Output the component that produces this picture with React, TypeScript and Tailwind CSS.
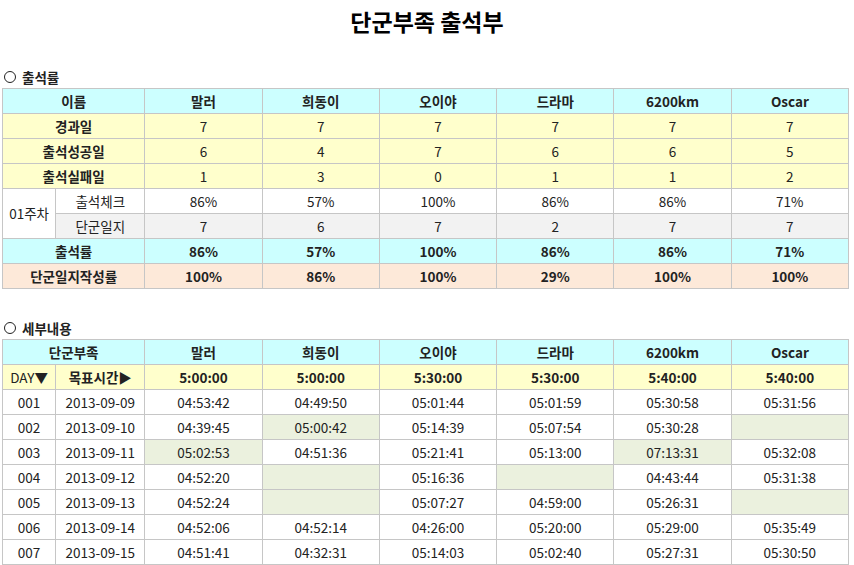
import React from "react";

const names = ["말러", "희동이", "오이야", "드라마", "6200km", "Oscar"];

const summary = {
  days: ["7", "7", "7", "7", "7", "7"],
  success: ["6", "4", "7", "6", "6", "5"],
  fail: ["1", "3", "0", "1", "1", "2"],
  check: ["86%", "57%", "100%", "86%", "86%", "71%"],
  journal: ["7", "6", "7", "2", "7", "7"],
  rate: ["86%", "57%", "100%", "86%", "86%", "71%"],
  journalRate: ["100%", "86%", "100%", "29%", "100%", "100%"],
};

const targets = ["5:00:00", "5:00:00", "5:30:00", "5:30:00", "5:40:00", "5:40:00"];

// "!" prefix marks a highlighted (late / missing) cell
const details = [
  { day: "001", date: "2013-09-09", times: ["04:53:42", "04:49:50", "05:01:44", "05:01:59", "05:30:58", "05:31:56"] },
  { day: "002", date: "2013-09-10", times: ["04:39:45", "!05:00:42", "05:14:39", "05:07:54", "05:30:28", "!"] },
  { day: "003", date: "2013-09-11", times: ["!05:02:53", "04:51:36", "05:21:41", "05:13:00", "!07:13:31", "05:32:08"] },
  { day: "004", date: "2013-09-12", times: ["04:52:20", "!", "05:16:36", "!", "04:43:44", "05:31:38"] },
  { day: "005", date: "2013-09-13", times: ["04:52:24", "!", "05:07:27", "04:59:00", "05:26:31", "!"] },
  { day: "006", date: "2013-09-14", times: ["04:52:06", "04:52:14", "04:26:00", "05:20:00", "05:29:00", "05:35:49"] },
  { day: "007", date: "2013-09-15", times: ["04:51:41", "04:32:31", "05:14:03", "05:02:40", "05:27:31", "05:30:50"] },
];

const td = "border border-[#c6c6c6] h-[25px] p-0 text-center align-middle";

const Colgroup = () => (
  <colgroup>
    <col className="w-[53px]" />
    <col className="w-[89px]" />
    {names.map((n) => (
      <col key={n} className="w-[117px]" />
    ))}
  </colgroup>
);

const ValueRow = ({ label, values, bg, bold }: { label: string; values: string[]; bg: string; bold?: boolean }) => (
  <tr className={bg}>
    <td colSpan={2} className={`${td} font-bold`}>
      {label}
    </td>
    {values.map((v, i) => (
      <td key={i} className={`${td} ${bold ? "font-bold" : ""}`}>
        {v}
      </td>
    ))}
  </tr>
);

const SectionTitle = ({ children }: { children: React.ReactNode }) => (
  <div className="flex items-center gap-[6px] pl-[2px] h-[18px] text-[13.5px] font-bold">
    <span className="w-[12px] h-[12px] rounded-full border-[1.5px] border-[#222]" />
    <span>{children}</span>
  </div>
);

export default function App() {
  return (
    <div
      className="w-[854px] h-[565px] bg-white text-[#222] text-[13.5px] overflow-hidden px-[2px]"
      style={{ fontFamily: '"Noto Sans CJK KR", "Noto Sans", sans-serif' }}
    >
      <h1 className="text-center text-[23px] leading-[30px] font-bold pt-[6px] h-[68px] text-black">단군부족 출석부</h1>

      <SectionTitle>출석률</SectionTitle>
      <table className="mt-[2px] w-[847px] border-collapse table-fixed">
        <Colgroup />
        <tbody>
          <tr className="bg-[#ccffff]">
            <td colSpan={2} className={`${td} font-bold`}>이름</td>
            {names.map((n) => (
              <td key={n} className={`${td} font-bold`}>{n}</td>
            ))}
          </tr>
          <ValueRow label="경과일" values={summary.days} bg="bg-[#ffffcc]" />
          <ValueRow label="출석성공일" values={summary.success} bg="bg-[#ffffcc]" />
          <ValueRow label="출석실패일" values={summary.fail} bg="bg-[#ffffcc]" />
          <tr>
            <td rowSpan={2} className={`${td} bg-white`}>01주차</td>
            <td className={td}>출석체크</td>
            {summary.check.map((v, i) => (
              <td key={i} className={td}>{v}</td>
            ))}
          </tr>
          <tr className="bg-[#f2f2f2]">
            <td className={td}>단군일지</td>
            {summary.journal.map((v, i) => (
              <td key={i} className={td}>{v}</td>
            ))}
          </tr>
          <ValueRow label="출석률" values={summary.rate} bg="bg-[#ccffff]" bold />
          <ValueRow label="단군일지작성률" values={summary.journalRate} bg="bg-[#fde9d9]" bold />
        </tbody>
      </table>

      <div className="h-[30px]" />
      <SectionTitle>세부내용</SectionTitle>
      <table className="mt-[2px] w-[847px] border-collapse table-fixed">
        <Colgroup />
        <tbody>
          <tr className="bg-[#ccffff]">
            <td colSpan={2} className={`${td} font-bold`}>단군부족</td>
            {names.map((n) => (
              <td key={n} className={`${td} font-bold`}>{n}</td>
            ))}
          </tr>
          <tr className="bg-[#ffffcc]">
            <td className={td}>DAY▼</td>
            <td className={`${td} font-bold`}>목표시간▶</td>
            {targets.map((t, i) => (
              <td key={i} className={`${td} font-bold`}>{t}</td>
            ))}
          </tr>
          {details.map((row) => (
            <tr key={row.day}>
              <td className={td}>{row.day}</td>
              <td className={td}>{row.date}</td>
              {row.times.map((t, i) => {
                const late = t.startsWith("!");
                return (
                  <td key={i} className={`${td} ${late ? "bg-[#ebf1de]" : ""}`}>
                    {late ? t.slice(1) : t}
                  </td>
                );
              })}
            </tr>
          ))}
        </tbody>
      </table>
    </div>
  );
}
